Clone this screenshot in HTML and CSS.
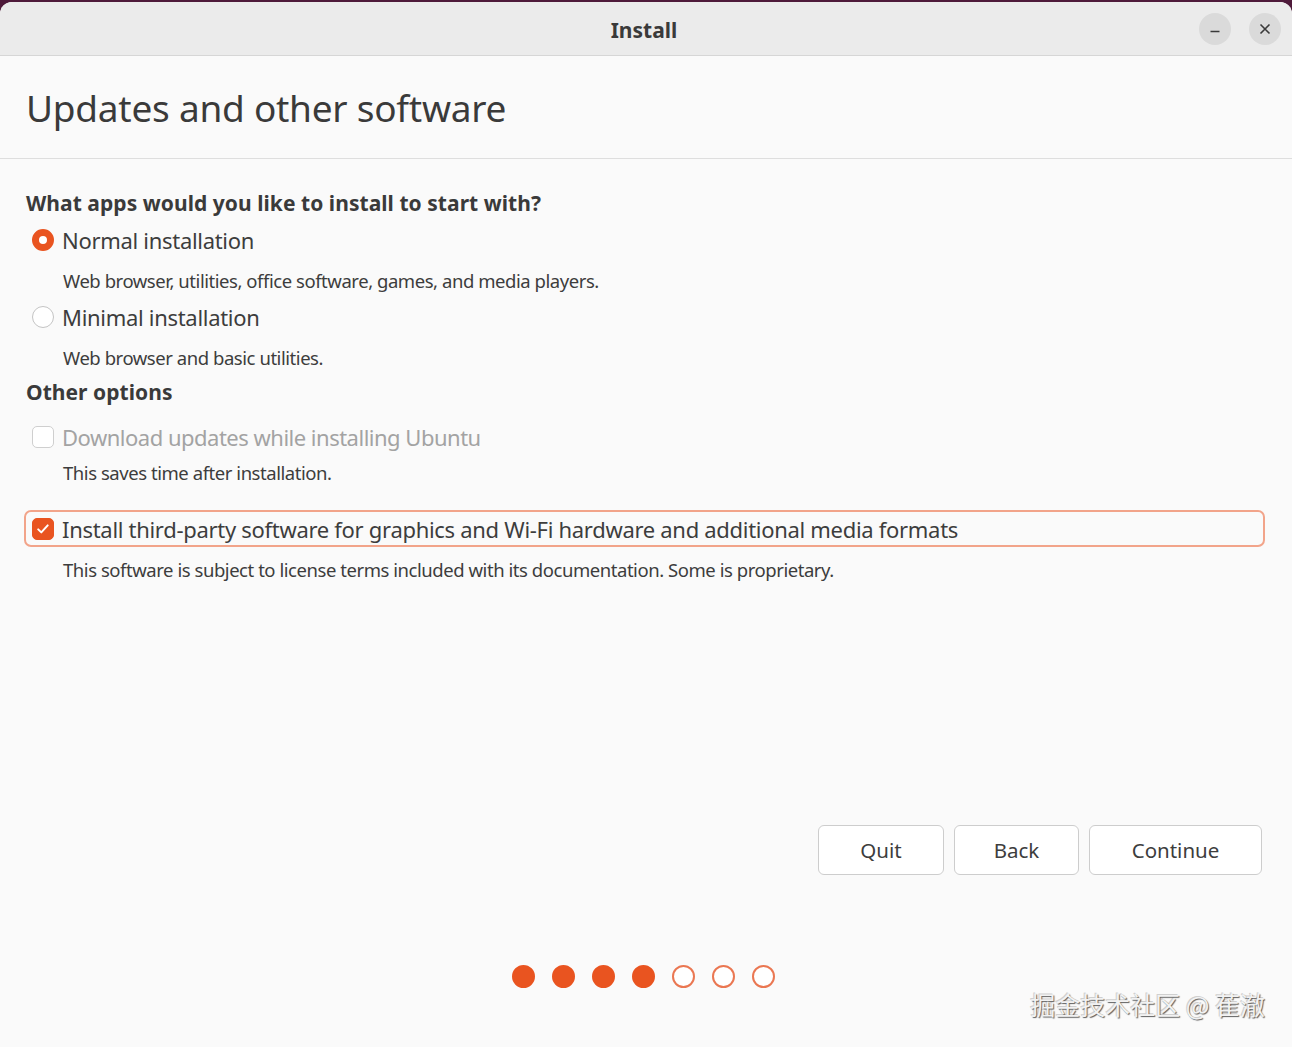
FILE: index.html
```html
<!DOCTYPE html>
<html lang="en">
<head>
<meta charset="utf-8">
<title>Install</title>
<link rel="stylesheet" href="styles.css">
</head>
<body>
<div class="window">
  <header class="titlebar">
    <div class="title">Install</div>
    <div class="wm-buttons">
      <span class="wm-btn"><svg width="16" height="16" viewBox="0 0 16 16"><path d="M3.5 10.5h9" stroke="#3a3a3a" stroke-width="1.6" fill="none"/></svg></span>
      <span class="wm-btn"><svg width="16" height="16" viewBox="0 0 16 16"><path d="M3.5 3.5l9 9M12.5 3.5l-9 9" stroke="#3a3a3a" stroke-width="1.6" fill="none"/></svg></span>
    </div>
  </header>
  <div class="page-head">
    <h1>Updates and other software</h1>
  </div>
  <main class="content">
    <h2 class="section first">What apps would you like to install to start with?</h2>
    <div class="option">
      <span class="radio checked"></span>
      <span class="label">Normal installation</span>
    </div>
    <p class="desc">Web browser, utilities, office software, games, and media players.</p>
    <div class="option o2">
      <span class="radio"></span>
      <span class="label">Minimal installation</span>
    </div>
    <p class="desc">Web browser and basic utilities.</p>
    <h2 class="section second">Other options</h2>
    <div class="option o3 disabled">
      <span class="check"></span>
      <span class="label">Download updates while installing Ubuntu</span>
    </div>
    <p class="desc d3">This saves time after installation.</p>
    <div class="option focused">
      <span class="check checked"><svg width="16" height="16" viewBox="0 0 16 16"><path d="M3.2 8.4l3.1 3 6.4-7" stroke="#fff" stroke-width="2" fill="none" stroke-linecap="round" stroke-linejoin="round"/></svg></span>
      <span class="label">Install third-party software for graphics and Wi-Fi hardware and additional media formats</span>
    </div>
    <p class="desc d4">This software is subject to license terms included with its documentation. Some is proprietary.</p>
    <div class="actions">
      <button class="btn quit">Quit</button>
      <button class="btn back">Back</button>
      <button class="btn cont">Continue</button>
    </div>
    <div class="dots">
      <span class="dot on"></span><span class="dot on"></span><span class="dot on"></span><span class="dot on"></span><span class="dot"></span><span class="dot"></span><span class="dot"></span>
    </div>
  </main>
  <div class="watermark">掘金技术社区 @ 萑澈</div>
</div>
</body>
</html>
```
FILE: styles.css
```css
* { box-sizing: border-box; }
html, body { margin: 0; padding: 0; }
body {
  background: #4e1a3a;
  font-family: "Noto Sans", "Open Sans", sans-serif;
  color: #3d3d3d;
  width: 1292px;
  height: 1047px;
  overflow: hidden;
}
.window {
  position: relative;
  margin-top: 2px;
  height: 1045px;
  background: #fafafa;
  border-radius: 12px 12px 0 0;
  overflow: hidden;
  display: flex;
  flex-direction: column;
}
.titlebar {
  height: 54px;
  background: #ebebeb;
  border-bottom: 1px solid #d6d6d6;
  display: flex;
  align-items: center;
  justify-content: center;
  position: relative;
  flex: none;
}
.title {
  font-weight: 700;
  font-size: 21px;
  color: #3a3a3a;
  margin-top: 2px;
  margin-right: 4px;
}
.wm-buttons {
  position: absolute;
  right: 11px;
  top: 11px;
  display: flex;
  gap: 18px;
}
.wm-btn {
  width: 32px;
  height: 32px;
  border-radius: 50%;
  background: #dadada;
  display: flex;
  align-items: center;
  justify-content: center;
}
.page-head {
  height: 103px;
  border-bottom: 1px solid #dedede;
  padding-left: 26px;
  display: flex;
  align-items: center;
  flex: none;
}
h1 {
  margin: 0;
  font-weight: 400;
  font-size: 37px;
  color: #3a3a3a;
  letter-spacing: -0.25px;
}
.content {
  padding: 0 30px 0 26px;
  display: flex;
  flex-direction: column;
  flex: 1;
}
.section {
  margin: 0;
  font-size: 21px;
  font-weight: 700;
  line-height: 28px;
  color: #3a3a3a;
  letter-spacing: 0.05px;
}
.section.first { margin-top: 30px; }
.section.second { margin-top: 8px; }
.option {
  display: flex;
  align-items: center;
  height: 30px;
  margin-top: 8px;
  padding-left: 6px;
  gap: 8px;
}
.option.o2 { margin-top: 9px; }
.option.o3 { margin-top: 16px; }
.label {
  font-size: 22px;
  color: #3d3d3d;
  letter-spacing: -0.3px;
}
.disabled .label { color: #a3a3a3; letter-spacing: -0.5px; }
.radio {
  width: 22px;
  height: 22px;
  border-radius: 50%;
  border: 1px solid #c4c4c4;
  background: #fff;
  flex: none;
}
.radio.checked {
  border: 7.5px solid #e95420;
  background: #fff;
}
.check {
  width: 22px;
  height: 22px;
  border-radius: 5px;
  border: 1px solid #cfcfcf;
  background: #fff;
  flex: none;
  display: flex;
  align-items: center;
  justify-content: center;
}
.check.checked {
  background: #e95420;
  border-color: #e95420;
}
.desc {
  margin: 14px 0 0 37px;
  font-size: 18.5px;
  line-height: 24px;
  color: #3d3d3d;
  letter-spacing: -0.45px;
}
.desc.d3 { margin-top: 9px; }
.option.focused {
  margin-top: 25px;
  margin-left: -2px;
  margin-right: -3px;
  height: 37px;
  border: 2px solid #f2a48a;
  border-radius: 7px;
  padding-left: 6px;
}
.desc.d4 { margin-top: 11px; }
.actions {
  margin-top: 243px;
  display: flex;
  justify-content: flex-end;
  gap: 10px;
}
.btn {
  height: 50px;
  border: 1px solid #cdcdcd;
  border-radius: 6px;
  background: #fff;
  font-family: inherit;
  font-size: 20.5px;
  color: #3d3d3d;
  padding: 0;
}
.btn.quit { width: 126px; }
.btn.back { width: 125px; }
.btn.cont { width: 173px; }
.dots {
  margin-top: 90px;
  display: flex;
  justify-content: center;
  gap: 17px;
  margin-left: -2px;
}
.dot {
  width: 23px;
  height: 23px;
  border-radius: 50%;
  border: 2px solid #ea7752;
  background: #fff;
}
.dot.on {
  background: #e95420;
  border-color: #e95420;
}
.watermark {
  position: absolute;
  right: 27px;
  bottom: 25px;
  font-family: "Noto Sans CJK SC", sans-serif;
  font-size: 25px;
  color: #f2f2f2;
  text-shadow: 1px 1px 1px #5e5e5e, -1px -1px 0 #d0d0d0;
}
```
